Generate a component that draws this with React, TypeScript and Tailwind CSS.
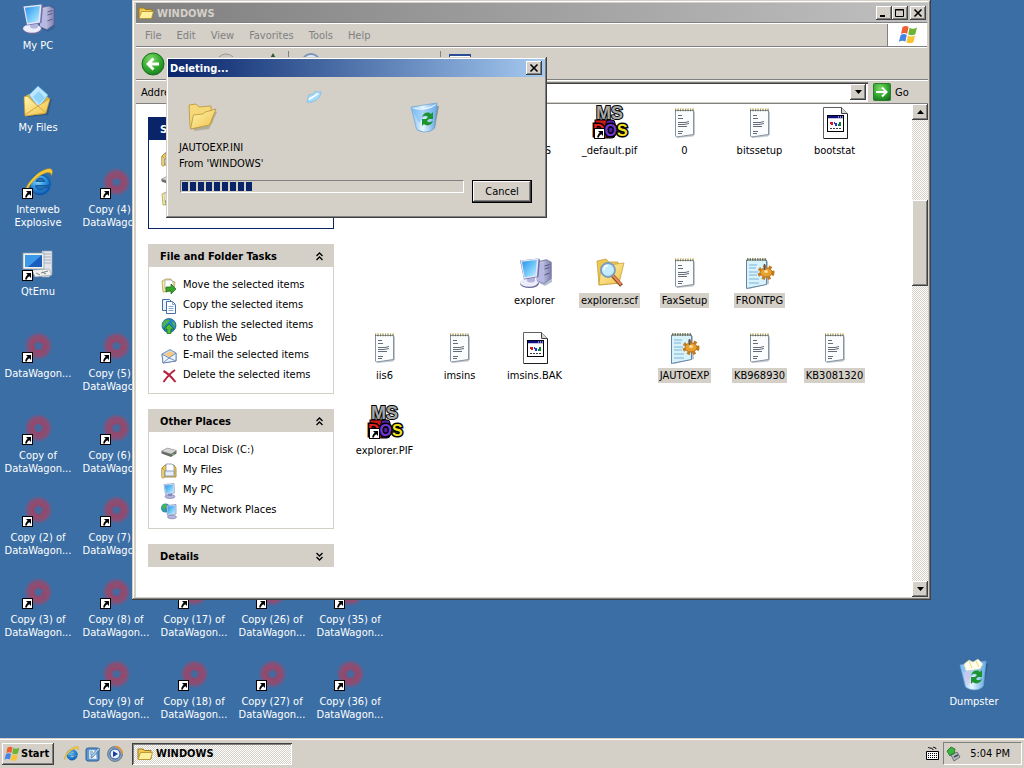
import type { ReactNode } from "react";

const RAISED = "bg-[#d4d0c8] shadow-[inset_-1px_-1px_0_#404040,inset_1px_1px_0_#fff,inset_-2px_-2px_0_#808080]";
const FRAME = "bg-[#d4d0c8] shadow-[inset_-1px_-1px_0_#404040,inset_1px_1px_0_#d4d0c8,inset_-2px_-2px_0_#808080,inset_2px_2px_0_#fff]";
const DITHER = "bg-[conic-gradient(#fff_25%,#d4d0c8_0_50%,#fff_0_75%,#d4d0c8_0)] bg-[length:2px_2px]";

/* ---------- gradients shared by the icons ---------- */

function Gradients() {
  return (
    <svg width="0" height="0" className="absolute" aria-hidden="true">
      <defs>
        <linearGradient id="screen" x1="0" y1="0" x2="1" y2="1">
          <stop offset="0" stopColor="#2a8fe8" />
          <stop offset="0.5" stopColor="#6cc4f8" />
          <stop offset="1" stopColor="#c4f0ff" />
        </linearGradient>
        <linearGradient id="folder" x1="0" y1="0" x2="1" y2="1">
          <stop offset="0" stopColor="#fff6b0" />
          <stop offset="1" stopColor="#f0c048" />
        </linearGradient>
        <linearGradient id="metal" x1="0" y1="0" x2="1" y2="0">
          <stop offset="0" stopColor="#e8e8fa" />
          <stop offset="1" stopColor="#8080b0" />
        </linearGradient>
        <linearGradient id="bin" x1="0" y1="0" x2="1" y2="0">
          <stop offset="0" stopColor="#7cbcf4" />
          <stop offset="0.45" stopColor="#e8f6ff" />
          <stop offset="1" stopColor="#5ca4e4" />
        </linearGradient>
        <radialGradient id="ie" cx="0.4" cy="0.3" r="0.8">
          <stop offset="0" stopColor="#8adcff" />
          <stop offset="0.5" stopColor="#2a8ee0" />
          <stop offset="1" stopColor="#0c4ca0" />
        </radialGradient>
        <radialGradient id="green" cx="0.4" cy="0.3" r="0.8">
          <stop offset="0" stopColor="#80dc68" />
          <stop offset="0.6" stopColor="#2ea42c" />
          <stop offset="1" stopColor="#147018" />
        </radialGradient>
        <radialGradient id="wagon" cx="0.5" cy="0.5" r="0.5">
          <stop offset="0" stopColor="#a04468" stopOpacity="0" />
          <stop offset="0.25" stopColor="#a84060" stopOpacity="0.25" />
          <stop offset="0.42" stopColor="#b43c58" stopOpacity="0.75" />
          <stop offset="0.75" stopColor="#a84464" stopOpacity="0.6" />
          <stop offset="1" stopColor="#904c78" stopOpacity="0" />
        </radialGradient>
      </defs>
    </svg>
  );
}

function Svg({ size = 32, children }: { size?: 16 | 32; children: ReactNode }) {
  return (
    <svg
      viewBox={size === 32 ? "0 0 32 32" : "0 0 16 16"}
      width={size}
      height={size}
      className="block shrink-0 overflow-visible"
      aria-hidden="true"
    >
      {children}
    </svg>
  );
}

/* ---------- 32px icons ---------- */

function Shortcut() {
  return (
    <g>
      <rect x="0.5" y="21.5" width="10" height="10" fill="#fff" stroke="#000" />
      <path d="M4 24h5v5l-1.700-1.700c-1.600 1-2.300 2-2.300 3.200h-1.800c0-2 .8-3.400 2.500-4.800z" fill="#000" />
    </g>
  );
}

const PcIcon = () => (
  <Svg>
    <path d="M20 4l8-2 5 3v20l-7 4-6-3z" fill="#2a4c7c" opacity=".35" />
    <path d="M18 5l9-2 5 2.500v16l-7 5-7-3z" fill="url(#metal)" stroke="#6868a0" strokeWidth=".7" />
    <path d="M19 5l5.500 2v19l-5.500-3z" fill="#b8b8e4" />
    <path d="M25.500 9l5-1.500M25.500 12l5-1.500M25.500 18l5-2" stroke="#55558c" />
    <ellipse cx="10.500" cy="26.500" rx="9.500" ry="4.500" fill="#6c6c9c" />
    <ellipse cx="10" cy="25.500" rx="9" ry="4.200" fill="#ececfa" />
    <path d="M8 20h8v4c-2 2-6 2-8 0z" fill="#b4b4dc" />
    <path d="M1 3.500l18-2 2 1-1.500 17.500-14.500 2.500z" fill="#7070a8" />
    <path d="M1.500 3.500l18-2-1.500 18-13 2.300z" fill="#e6e8f8" />
    <path d="M3 4.700l14.800-1.700-1.300 15.200-10.800 2z" fill="url(#screen)" />
  </Svg>
);

const MyFilesIcon = () => (
  <Svg>
    <path d="M5 10l25 4-4 16-20 2z" fill="#24446c" opacity=".5" />
    <path d="M2 12l5-3 14-1 7 6-5 15-20 2z" fill="#e4b440" />
    <path d="M7 10L16 1l10 9-9 13z" fill="#bce8ff" stroke="#5cacdc" strokeWidth=".7" />
    <path d="M17 6l6 7-6 6-6-7z" fill="#78c8f4" opacity=".65" />
    <path d="M2 12l3-1 11 10 12-7.500-4 14.500L3 31z" fill="url(#folder)" stroke="#c4922c" strokeWidth=".7" />
    <path d="M3 30l13-9 8 7" fill="none" stroke="#d4a438" />
  </Svg>
);

const IeGlyph = () => (
  <g>
    <path d="M28 18.500H13.500c.4 4.600 6.500 6 9 1.800h5c-2 6.500-9 8.700-14 6.200-6-3-7-11-2.500-15.500 6-6 17.500-2.500 17 7.500zM13.800 14.500h9c-.7-4.500-8-4.700-9 0z" fill="url(#ie)" stroke="#0c4484" strokeWidth=".7" />
    <path d="M4.500 27C0 24 10 8 22 3c7-3 10-1 7.500 5.500C29 5 26 4.500 21 7 12 11 5 21 4.500 27z" fill="#f4c838" stroke="#c08c18" strokeWidth=".5" />
  </g>
);

const IeShortcut = () => (
  <Svg>
    <circle cx="18.500" cy="17" r="11.500" fill="#1c70b8" opacity=".8" />
    <IeGlyph />
    <Shortcut />
  </Svg>
);

const QtEmuIcon = () => (
  <Svg>
    <path d="M20 2h10v23l-3 3h-7z" fill="#e2e6ec" stroke="#98a4b4" strokeWidth=".7" />
    <path d="M21 5h8M21 8h8M21 11h8M21 14h8" stroke="#a4b0c0" />
    <rect x="1" y="4" width="21" height="16" fill="#f2f2ea" stroke="#8c98a8" strokeWidth=".7" />
    <rect x="3" y="6" width="17" height="12" fill="#1c5cbc" />
    <path d="M3 6h17L6 18H3z" fill="#3c98e8" />
    <path d="M10 21l17-1 3 6-17 2z" fill="#f0f0ec" stroke="#98a0ac" strokeWidth=".7" />
    <path d="M14 24l4 2m2-3 4 2m-5-1 7-2" stroke="#7c8490" />
    <Shortcut />
  </Svg>
);

const DataWagonIcon = () => (
  <Svg>
    <circle cx="16.500" cy="15" r="14.500" fill="url(#wagon)" />
    <circle cx="16.500" cy="15" r="5" fill="none" stroke="#c03050" strokeWidth="1.500" strokeDasharray="4 2" opacity=".45" />
    <circle cx="16.500" cy="15" r="9.500" fill="none" stroke="#b83858" strokeWidth="2" strokeDasharray="3 3" opacity=".25" />
    <Shortcut />
  </Svg>
);

const BinIcon = ({ full = false }: { full?: boolean }) => (
  <Svg>
    <path d="M6 7l24-2-4 22c-5 5-14 5-18 2z" fill="#2c4864" opacity=".45" />
    <path d="M2 6l26-4-2.500 25c-4 5-13 5-18 1z" fill="url(#bin)" stroke="#6ca4d0" strokeWidth=".7" />
    <path d="M2 6c7 3 18 2 26-4l-2 13c-6-1-12 0-16 7z" fill="#72b8f0" opacity=".55" />
    {full ? (
      <g>
        <path d="M6 5l5-4 4 2 5-3 5 5-3 5-14 2z" fill="#fffdf0" stroke="#c4c8a0" strokeWidth=".5" />
        <path d="M11 2l3 7m4-7 3 6" stroke="#e4d878" />
        <path d="M6 13l6-2 1 13-5 2z" fill="#d8c8ec" opacity=".7" />
      </g>
    ) : (
      <path d="M2 6c8 3 20 1 26-4-4 7-20 9-26 4z" fill="#eaf7ff" />
    )}
    <g fill="#1c9430">
      <path d="M13 16c1-4 6-6 9-3l2-2v7h-7l2-2c-2-2-4-1-6 0z" />
      <path d="M24 20c-1 4-6 6-9 3l-2 2v-7h7l-2 2c2 2 4 1 6 0z" />
    </g>
  </Svg>
);

const TextIcon = () => (
  <Svg>
    <path d="M7 4.500h19v23l-2 2L8 31z" fill="#8c949c" opacity=".5" />
    <path d="M6.500 3.500h18v24l-17 2.500-1-1z" fill="#fbfcfd" stroke="#8894a4" />
    <path d="M6 3h19" stroke="#6c6c50" strokeWidth="2.500" strokeDasharray="1 1.500" />
    <path d="M6 2h19" stroke="#d8c468" strokeDasharray="1.500 1" />
    <path d="M9 8.500h4M9 11.500h5M9 15.500h7l4-1M9 17.500h6l5-1M9 19.500h9M9 24.500h5M9 26.500h4" stroke="#646c78" fill="none" />
  </Svg>
);

const IniIcon = () => (
  <Svg>
    <path d="M3 4h21l1 23-20 5z" fill="#78889c" opacity=".5" />
    <path d="M2.500 3h20v24.500l-20 4z" fill="#d8f2fc" stroke="#6484a4" />
    <path d="M3 2.500h20" stroke="#6c6c48" strokeWidth="2.500" strokeDasharray="1.500 1" />
    <path d="M5 8h8M5 11h7M5 15h9M5 18h8M5 22h10M5 26h10" stroke="#7cb4d8" />
    <g>
      <ellipse cx="22" cy="15.500" rx="7" ry="6" fill="none" stroke="#c07c20" strokeWidth="3" strokeDasharray="3 2.500" />
      <ellipse cx="22" cy="15.500" rx="6" ry="4.500" fill="#eaa02c" stroke="#b87018" />
      <ellipse cx="22" cy="14.500" rx="2" ry="1.500" fill="#fbe0a0" />
      <path d="M20.500 7v6" stroke="#505868" strokeWidth="1.500" />
    </g>
  </Svg>
);

const BakIcon = () => (
  <Svg>
    <path d="M4.500.5h18l6 6v25h-24z" fill="#fff" stroke="#606060" />
    <path d="M5 31.500h23.500V7" fill="none" stroke="#202020" />
    <path d="M22.500.5v6h6" fill="#d4d4d4" stroke="#404040" />
    <rect x="8.500" y="8.500" width="16" height="16" fill="#fff" stroke="#000" />
    <path d="M9 10h15" stroke="#10107c" strokeWidth="2.500" />
    <path d="M19 10h1m1 0h1m1 0h1" stroke="#fff" />
    <path d="M11 15h3v3h-2v-1h-1z" fill="#d01818" />
    <path d="M15 15h1v1h2v3h-2v-2h-1z" fill="#1838c8" />
    <path d="M20 15h2v4h-3v-2h1z" fill="#107c38" />
    <path d="M11 21.500h2m1 0h2m1 0h2m1 0h2" stroke="#404040" />
  </Svg>
);

const DosIcon = () => (
  <Svg>
    <rect x="1" y="13" width="13" height="18" fill="#d01818" stroke="#000" />
    <rect x="12" y="13" width="9" height="18" rx="3" fill="#5420a4" stroke="#000" />
    <g fontFamily="'Liberation Sans', sans-serif" fontWeight="700" stroke="#000" paintOrder="stroke">
      <text x="2" y="12" fontSize="18" strokeWidth="2" fill="#a8a8a8">MS</text>
      <text x="-1" y="29" fontSize="16" strokeWidth="3">
        <tspan fill="#e82020">D</tspan>
        <tspan fill="#7038d0">O</tspan>
        <tspan fill="#f4e020">S</tspan>
      </text>
    </g>
    <Shortcut />
  </Svg>
);

const ScfIcon = () => (
  <Svg>
    <path d="M3 4l9-2 3 3h9l1 21-20 2z" fill="#eec850" stroke="#c09830" strokeWidth=".7" />
    <path d="M7 9l23-3-5 20-20 2z" fill="url(#folder)" stroke="#c09830" strokeWidth=".7" />
    <path d="M18.500 18.500l9 10" stroke="#8c4c28" strokeWidth="4" />
    <path d="M18.500 18l8.500 9.500" stroke="#e88c58" strokeWidth="2" />
    <circle cx="14" cy="13" r="7" fill="#c4ecff" stroke="#7c9cc0" strokeWidth="1.800" />
    <path d="M10 13c0-3 2-4.500 4-4.500" stroke="#fff" strokeWidth="1.500" fill="none" />
  </Svg>
);

const OpenFolderIcon = () => (
  <Svg>
    <path d="M6 8l25 3-8 17-15 2z" fill="#807850" opacity=".4" />
    <path d="M3 4l7-1 3 3 12-1 1 17-20 6-2-2z" fill="#f6d878" stroke="#b89438" strokeWidth=".8" />
    <path d="M4.500 28l3-14 9-1 3-2 10.500-3-6.500 16z" fill="url(#folder)" stroke="#b89438" strokeWidth=".8" />
  </Svg>
);

/* ---------- 16px icons ---------- */

const FolderSmall = () => (
  <Svg size={16}>
    <path d="M1 3h5l1.500 1.500H14V13H1z" fill="#f0c850" stroke="#9c7820" />
    <path d="M3.500 6.500h12L13.500 13.500H1z" fill="#fff09c" stroke="#b08c28" strokeWidth=".8" />
  </Svg>
);

const FlagIcon = ({ size = 16 }: { size?: 16 | 32 }) => (
  <svg viewBox="0 0 18 18" width={size === 16 ? 18 : 22} height={size === 16 ? 18 : 22} className="block shrink-0" aria-hidden="true">
    <path d="M4.500 2.500c2-1.300 3.700-1 5 0L8.300 8c-1.600-1-3-1-5 .1z" fill="#ec6038" />
    <path d="M10.300 3c2 1.200 3.500 1 6-.2L15 8.300c-2.200 1.200-4 1.200-5.800.1z" fill="#6cb434" />
    <path d="M3 9c2-1.200 3.600-1 5-.1L6.800 14.500c-1.600-1-3.300-1-5.300.2z" fill="#4484e4" />
    <path d="M9 9.500c2 1.100 3.700 1 5.800-.2l-1.300 5.600c-2.200 1.200-4 1.100-5.800 0z" fill="#f8c434" />
  </svg>
);

const MoveIcon = () => (
  <Svg size={16}>
    <path d="M1 3l4-2h5l1 2 3 1-1 9-11 1z" fill="#f6e89c" stroke="#a89448" strokeWidth=".7" />
    <path d="M4 2h6l2 2v7H4z" fill="#fff" stroke="#98a0b0" strokeWidth=".7" />
    <path d="M5 9h5V6l5 5-5 5v-3H7l-2 1z" fill="#38a428" stroke="#14641c" strokeWidth=".7" />
  </Svg>
);
const CopyIcon = () => (
  <Svg size={16}>
    <path d="M1.500 1.500h7l2 2v9h-9z" fill="#e8f2ff" stroke="#486ca8" />
    <path d="M5.500 3.500h6l3 3v9h-9z" fill="#fff" stroke="#486ca8" />
    <path d="M11.500 3.500v3h3M7.500 8.500h5m-5 2h5m-5 2h5" stroke="#84a8d4" fill="none" />
  </Svg>
);
const PublishIcon = () => (
  <Svg size={16}>
    <circle cx="8" cy="7.500" r="7" fill="#2484c4" stroke="#145888" strokeWidth=".7" />
    <path d="M2 4c3-3 6-3 7-2L7 5 5 6 3 9 1 8zM11 3l3 2v4l-2-2z" fill="#4cb44c" />
    <path d="M8 6l5 5h-3v4.500H6V11H3z" fill="#50c038" stroke="#14681c" strokeWidth=".7" />
  </Svg>
);
const MailIcon = () => (
  <Svg size={16}>
    <path d="M1 6l8-4.500L15 5v8L2 15z" fill="#c4dcf8" stroke="#5878a8" strokeWidth=".8" />
    <path d="M3 6l7-3 4 3-5 4z" fill="#f8c880" />
    <path d="M1 6l7 4 7-5v8L2 15z" fill="#eaf4ff" stroke="#5878a8" strokeWidth=".8" />
    <path d="M2 15l6-5 7 3" stroke="#7890b8" fill="none" />
  </Svg>
);
const DeleteIcon = () => (
  <Svg size={16}>
    <path d="M2.500 3c4 2 8 6 12 11M14 2C9 5 6 9 2.500 14" stroke="#b8203c" strokeWidth="2" fill="none" />
  </Svg>
);
const DiskIcon = () => (
  <Svg size={16}>
    <path d="M.5 8l6-3 9 2.500v3L10 14 .5 10.500z" fill="#686868" />
    <path d="M.5 8l6-3 9 2.500L10 11z" fill="#d4d4d4" stroke="#909090" strokeWidth=".5" />
    <path d="M11 12l2-1" stroke="#78e068" />
  </Svg>
);
const FilesSmall = () => (
  <Svg size={16}>
    <path d="M1 5l3-3h9l2 3v9H1z" fill="#f0c850" stroke="#a07c20" strokeWidth=".8" />
    <path d="M5 1h6l2 2v8H5z" fill="#fff" stroke="#7890b8" strokeWidth=".8" />
    <path d="M4 8h9v5H4z" fill="#e4eefc" stroke="#7890b8" strokeWidth=".8" />
    <path d="M1 5l2 2v8H1z" fill="#fff09c" stroke="#a07c20" strokeWidth=".6" />
  </Svg>
);
const PcSmall = () => (
  <Svg size={16}>
    <ellipse cx="9" cy="13.500" rx="5" ry="2" fill="#b4b4dc" stroke="#7878a8" strokeWidth=".6" />
    <path d="M7 10h4v3H7z" fill="#8888bc" />
    <path d="M3 1.500l10-1 .5 9.500-9 1.500z" fill="#d8e0f4" stroke="#7890c0" strokeWidth=".6" />
    <path d="M4 2.500l8-.7.3 7.500-7.300 1z" fill="url(#screen)" />
  </Svg>
);
const NetworkIcon = () => (
  <Svg size={16}>
    <circle cx="4.500" cy="5" r="4.500" fill="#2c98a8" />
    <path d="M1 3l3-2 2 2-3 4z" fill="#4cb848" />
    <ellipse cx="11" cy="14" rx="4.500" ry="1.800" fill="#b4b4dc" stroke="#7878a8" strokeWidth=".6" />
    <path d="M5.500 2.500l9.500-1v9.500l-8.500 1.500z" fill="#d8e0f4" stroke="#6078a8" strokeWidth=".6" />
    <path d="M6.500 3.500l7.500-.8v7.500l-7 1z" fill="url(#screen)" />
  </Svg>
);
const IeSmall = () => (
  <svg viewBox="1 1 30 30" width="16" height="16" className="block" aria-hidden="true">
    <circle cx="18" cy="17" r="11" fill="#6cc0f0" opacity=".7" />
    <IeGlyph />
  </svg>
);
const ShowDesktop = () => (
  <Svg size={16}>
    <rect x="1" y="2" width="13" height="13" rx="2" fill="#5898d0" stroke="#2c5c94" />
    <path d="M4 4h7l1 9H4z" fill="#f4faff" stroke="#7ca0c8" strokeWidth=".6" />
    <path d="M6 10l7-8 2 1-7 8-2 1z" fill="#a8d4f4" stroke="#34648c" strokeWidth=".7" />
    <path d="M5 6h3M5 8h2" stroke="#507ca8" />
  </Svg>
);
const PlayerIcon = () => (
  <Svg size={16}>
    <circle cx="8" cy="8" r="7.500" fill="#88a0b8" stroke="#4c6480" strokeWidth=".7" />
    <path d="M8 .500A7.500 7.500 0 0 1 15.500 8" stroke="#f09030" strokeWidth="1.500" fill="none" />
    <circle cx="8" cy="8" r="5" fill="#eaf4ff" stroke="#2c58a8" />
    <path d="M6 5l5 3-5 3z" fill="#1c3c9c" />
  </Svg>
);
const KeyboardIcon = () => (
  <Svg size={16}>
    <path d="M4 1c1 2 5 0 5 3M9 1c1 1 3 0 3 2" stroke="#000" fill="none" />
    <path d="M2.500 5.500h12v8h-12z" fill="#fff" stroke="#000" />
    <path d="M4 7.500h9M4 9.500h9M4 11.500h9" stroke="#000" strokeDasharray="1 1" />
  </Svg>
);
const SafelyRemove = () => (
  <Svg size={16}>
    <path d="M5 9l6-3 3 5-6 4z" fill="#b8bcc0" stroke="#505860" strokeWidth=".8" />
    <path d="M8 11l4-2" stroke="#404850" strokeWidth="1.500" />
    <path d="M1 5l4-4 4 2-1 5H6l-2 2z" fill="#3cb43c" stroke="#18701c" strokeWidth=".8" />
  </Svg>
);

/* ---------- desktop ---------- */

type Item = { icon: ReactNode; label: string } | null;

const dw = (label: string): Item => ({ icon: <DataWagonIcon />, label });
const gap = (n: number): Item[] => Array.from({ length: n }, () => null);

const desktopColumns: Item[][] = [
  [
    { icon: <PcIcon />, label: "My PC" },
    { icon: <MyFilesIcon />, label: "My Files" },
    { icon: <IeShortcut />, label: "Interweb Explosive" },
    { icon: <QtEmuIcon />, label: "QtEmu" },
    dw("DataWagon..."),
    dw("Copy of DataWagon..."),
    dw("Copy (2) of DataWagon..."),
    dw("Copy (3) of DataWagon..."),
  ],
  [
    ...gap(2),
    dw("Copy (4) of DataWagon..."),
    null,
    dw("Copy (5) of DataWagon..."),
    dw("Copy (6) of DataWagon..."),
    dw("Copy (7) of DataWagon..."),
    dw("Copy (8) of DataWagon..."),
    dw("Copy (9) of DataWagon..."),
  ],
  [...gap(7), dw("Copy (17) of DataWagon..."), dw("Copy (18) of DataWagon...")],
  [...gap(7), dw("Copy (26) of DataWagon..."), dw("Copy (27) of DataWagon...")],
  [...gap(7), dw("Copy (35) of DataWagon..."), dw("Copy (36) of DataWagon...")],
];

function DesktopIcon({ item }: { item: Item }) {
  return (
    <div className="flex h-[82px] w-[78px] flex-col items-center gap-1 pt-[3px] pr-[2px] text-center leading-[13px] text-white">
      {item && (
        <>
          {item.icon}
          <span className="w-[74px]">{item.label}</span>
        </>
      )}
    </div>
  );
}

/* ---------- explorer window ---------- */

function Caption({ label, children }: { label: string; children: ReactNode }) {
  return (
    <button type="button" aria-label={label} className={`${RAISED} flex h-[14px] w-4 items-center justify-center`}>
      <svg viewBox="0 0 12 10" width="12" height="10" fill="none" stroke="#000" aria-hidden="true">
        {children}
      </svg>
    </button>
  );
}

const CloseGlyph = () => <path d="M2.500 1.500l7 7m0-7l-7 7" strokeWidth="1.600" />;

function Panel({ title, dark = false, closed = false, children }: { title: string; dark?: boolean; closed?: boolean; children?: ReactNode }) {
  return (
    <section>
      <button
        type="button"
        className={`flex h-[23px] w-full items-center justify-between pt-[2px] pr-[10px] pl-3 font-bold ${dark ? "bg-[#0a246a] text-white" : "bg-[#d4d0c8] text-black"}`}
      >
        {title}
        <svg viewBox="0 0 9 10" width="9" height="10" fill="none" stroke="currentColor" strokeWidth="1.300" aria-hidden="true">
          <path d={closed ? "M1.500 1l3 3 3-3M1.500 5l3 3 3-3" : "M1.500 4l3-3 3 3M1.500 8l3-3 3 3"} />
        </svg>
      </button>
      {children && (
        <div className={`border border-t-0 px-3 pt-[11px] pb-[5px] ${dark ? "h-[89px] border-[#0a246a]" : "border-[#d4d0c8]"}`}>{children}</div>
      )}
    </section>
  );
}

function TaskList({ items }: { items: [ReactNode, string][] }) {
  return (
    <ul>
      {items.map(([icon, label]) => (
        <li key={label}>
          <a href="#" className="flex items-start gap-[6px] pb-1 leading-[13px]">
            {icon}
            <span className="flex-1">{label}</span>
          </a>
        </li>
      ))}
    </ul>
  );
}

type FileItem = { icon: ReactNode; label: string; selected?: boolean } | null;

const files: FileItem[] = [
  null,
  null,
  { icon: <TextIcon />, label: "FONTS" },
  { icon: <DosIcon />, label: "_default.pif" },
  { icon: <TextIcon />, label: "0" },
  { icon: <TextIcon />, label: "bitssetup" },
  { icon: <BakIcon />, label: "bootstat" },
  null, null, null, null, null, null, null,
  null,
  null,
  { icon: <PcIcon />, label: "explorer" },
  { icon: <ScfIcon />, label: "explorer.scf", selected: true },
  { icon: <TextIcon />, label: "FaxSetup", selected: true },
  { icon: <IniIcon />, label: "FRONTPG", selected: true },
  null,
  { icon: <TextIcon />, label: "iis6" },
  { icon: <TextIcon />, label: "imsins" },
  { icon: <BakIcon />, label: "imsins.BAK" },
  null,
  { icon: <IniIcon />, label: "JAUTOEXP", selected: true },
  { icon: <TextIcon />, label: "KB968930", selected: true },
  { icon: <TextIcon />, label: "KB3081320", selected: true },
  { icon: <DosIcon />, label: "explorer.PIF" },
];

function Arrow({ up = false }: { up?: boolean }) {
  return (
    <svg viewBox="0 0 7 4" width="7" height="4" aria-hidden="true">
      <path d={up ? "M0 4L3.500 0 7 4z" : "M0 0h7L3.500 4z"} />
    </svg>
  );
}

function Explorer() {
  return (
    <main className={`${FRAME} absolute top-0 left-[132px] flex h-[600px] w-[799px] flex-col p-[3px] pl-1`}>
      <header className="flex h-5 shrink-0 items-center gap-[3px] bg-linear-to-r from-[#808080] to-[#c0c0c0] px-[2px]">
        <FolderSmall />
        <h1 className="flex-1 font-bold text-[#d4d0c8]">WINDOWS</h1>
        <div className="flex">
          <Caption label="Minimize"><path d="M2 8h5" strokeWidth="2" /></Caption>
          <Caption label="Maximize"><path d="M1.500 1.500h8v7h-8zM1 2h9" /></Caption>
          <span className="w-[2px]" />
          <Caption label="Close"><CloseGlyph /></Caption>
        </div>
      </header>

      <nav className="mr-px flex h-6 shrink-0 border-t border-b border-t-white border-b-[#808080] text-[#808080] shadow-[0_1px_0_#fff,0_-1px_0_#808080]">
        <div className="flex flex-1 items-center gap-[15px] pt-px pl-[9px]">
          {["File", "Edit", "View", "Favorites", "Tools", "Help"].map((m) => (
            <button type="button" key={m}>{m}</button>
          ))}
        </div>
        <div className="flex w-10 items-center justify-center border-l border-[#808080] bg-white">
          <FlagIcon size={32} />
        </div>
      </nav>

      <div className="mt-[2px] flex h-[31px] shrink-0 items-center border-b border-[#808080] pl-[5px]">
        <button type="button" aria-label="Back" className="w-[74px]">
          <svg viewBox="0 0 24 24" width="24" height="24" aria-hidden="true">
            <circle cx="12" cy="12" r="11" fill="url(#green)" stroke="#187020" />
            <path d="M18 12H8m4.500-5.500L7 12l5.500 5.500" stroke="#fff" strokeWidth="2.800" fill="none" />
          </svg>
        </button>
        <button type="button" aria-label="Forward" className="w-[44px]">
          <svg viewBox="0 0 22 22" width="22" height="22" aria-hidden="true">
            <circle cx="11" cy="11" r="10" fill="#c8c8c4" stroke="#989894" />
          </svg>
        </button>
        <button type="button" aria-label="Up" className="w-[29px]">
          <svg viewBox="0 0 20 22" width="20" height="22" aria-hidden="true">
            <path d="M14 0l4 7h-8z" fill="#30582c" />
          </svg>
        </button>
        <span className="h-[26px] w-px bg-[#808080]" />
        <button type="button" aria-label="Search" className="ml-3 w-[139px]">
          <svg viewBox="0 0 22 22" width="22" height="22" aria-hidden="true">
            <circle cx="10" cy="10" r="9" fill="#d8ecf8" stroke="#7c94b4" strokeWidth="2" />
          </svg>
        </button>
        <span className="h-[26px] w-px bg-[#808080]" />
        <button type="button" aria-label="Views" className="ml-2 h-5 w-[22px] border border-t-2 border-[#2c4c94] bg-white" />
      </div>

      <div className="flex h-6 shrink-0 items-center gap-1 border-t border-b border-t-white border-b-[#808080] pl-[5px]">
        <label htmlFor="address">Address</label>
        <div className="flex h-5 flex-1 bg-white p-[2px] shadow-[inset_1px_1px_0_#808080,inset_2px_2px_0_#404040,inset_-1px_-1px_0_#fff]">
          <input id="address" className="min-w-0 flex-1 outline-none" />
          <button type="button" aria-label="Show addresses" className={`${RAISED} flex w-4 items-center justify-center`}>
            <Arrow />
          </button>
        </div>
        <button type="button" className="flex w-14 items-center gap-1 pl-px">
          <svg viewBox="0 0 18 18" width="18" height="18" aria-hidden="true">
            <rect x=".5" y=".5" width="17" height="17" rx="1" fill="url(#green)" stroke="#2c7c30" />
            <path d="M3 9h10M9 4.500L13.500 9 9 13.500" stroke="#fff" strokeWidth="2" fill="none" />
          </svg>
          Go
        </button>
      </div>

      <div className="flex min-h-0 flex-1 bg-white">
        <aside className="flex w-[198px] shrink-0 flex-col gap-[15px] pt-[13px] pl-3">
          <Panel title="System Tasks" dark>
            <TaskList items={[[<FilesSmall />, "Hide the contents"], [<DiskIcon />, "Add or remove programs"], [<MoveIcon />, "Search for files"]]} />
          </Panel>
          <Panel title="File and Folder Tasks">
            <TaskList
              items={[
                [<MoveIcon />, "Move the selected items"],
                [<CopyIcon />, "Copy the selected items"],
                [<PublishIcon />, "Publish the selected items to the Web"],
                [<MailIcon />, "E-mail the selected items"],
                [<DeleteIcon />, "Delete the selected items"],
              ]}
            />
          </Panel>
          <Panel title="Other Places">
            <TaskList
              items={[
                [<DiskIcon />, "Local Disk (C:)"],
                [<FilesSmall />, "My Files"],
                [<PcSmall />, "My PC"],
                [<NetworkIcon />, "My Network Places"],
              ]}
            />
          </Panel>
          <Panel title="Details" closed />
        </aside>

        <div className="grid flex-1 auto-rows-[75px] grid-cols-[repeat(7,75px)] pt-[3px] pl-[13px]">
          {files.map((f, i) => (
            <div key={i} className="flex flex-col items-center gap-1">
              {f && (
                <>
                  {f.icon}
                  <span className={`px-[2px] leading-[15px] ${f.selected ? "bg-[#d4d0c8]" : ""}`}>{f.label}</span>
                </>
              )}
            </div>
          ))}
        </div>

        <div className={`${DITHER} flex w-4 shrink-0 flex-col`}>
          <button type="button" aria-label="Scroll up" className={`${RAISED} flex h-4 items-center justify-center`}>
            <Arrow up />
          </button>
          <div className={`${RAISED} mt-20 h-[86px]`} />
          <span className="flex-1" />
          <button type="button" aria-label="Scroll down" className={`${RAISED} flex h-4 items-center justify-center`}>
            <Arrow />
          </button>
        </div>
      </div>
    </main>
  );
}

/* ---------- progress dialog ---------- */

function DeletingDialog() {
  return (
    <div role="dialog" aria-labelledby="deleting" className={`${FRAME} absolute top-[57px] left-[166px] h-[161px] w-[381px] p-[2px]`}>
      <header className="flex h-[18px] items-center justify-between bg-linear-to-r from-[#0a246a] to-[#a6caf0] pr-[3px] pl-[2px]">
        <h2 id="deleting" className="font-bold text-white">Deleting...</h2>
        <Caption label="Close"><CloseGlyph /></Caption>
      </header>
      <div className="flex h-14 items-end pl-[18px]">
        <OpenFolderIcon />
        <div className="flex w-[191px] justify-center self-start pt-3">
          <svg viewBox="0 0 18 16" width="16" height="14" aria-hidden="true">
            <path d="M1 15l2-8 5-1 3-4 2 2 4-1c0 6-5 10-11 12z" fill="#a4dcfc" stroke="#6cb4e8" strokeWidth=".7" />
            <path d="M3 12l5-3 6-4" stroke="#fff" strokeWidth="2" fill="none" />
          </svg>
        </div>
        <BinIcon />
      </div>
      <div className="pt-[7px] pl-[11px] leading-4">
        <p>JAUTOEXP.INI</p>
        <p>From 'WINDOWS'</p>
      </div>
      <div className="mt-2 flex items-start gap-2 pr-[13px] pl-3">
        <div
          role="progressbar"
          aria-label="Deleting files"
          aria-valuenow={25}
          className="flex h-[13px] flex-1 gap-[2px] border border-t-[#808080] border-r-white border-b-white border-l-[#808080] p-px"
        >
          {Array.from({ length: 9 }, (_, i) => (
            <span key={i} className="w-[6px] bg-[#0a246a]" />
          ))}
        </div>
        <button type="button" className={`${RAISED} h-[23px] w-[60px] border border-black`}>
          Cancel
        </button>
      </div>
    </div>
  );
}

/* ---------- taskbar ---------- */

function Taskbar() {
  return (
    <footer className="flex h-[30px] shrink-0 items-center border-t border-[#d4d0c8] bg-[#d4d0c8] px-[2px] shadow-[inset_0_1px_0_#fff]">
      <button type="button" className={`${RAISED} flex h-[22px] w-[52px] items-center pl-px font-bold`}>
        <FlagIcon />
        Start
      </button>
      <div className="flex w-[78px] items-center gap-[6px] pl-[9px]">
        <button type="button" aria-label="Web browser"><IeSmall /></button>
        <button type="button" aria-label="Show desktop"><ShowDesktop /></button>
        <button type="button" aria-label="Media player"><PlayerIcon /></button>
      </div>
      <button
        type="button"
        className={`${DITHER} flex h-[22px] w-40 items-center gap-[3px] pl-[5px] font-bold shadow-[inset_1px_1px_0_#404040,inset_-1px_-1px_0_#fff,inset_2px_2px_0_#808080]`}
      >
        <FolderSmall />
        WINDOWS
      </button>
      <div className="ml-auto flex items-center gap-[3px]">
        <KeyboardIcon />
        <div className="flex h-[23px] w-[79px] items-center justify-between border border-t-[#808080] border-r-white border-b-white border-l-[#808080] pr-[11px] pl-[2px]">
          <SafelyRemove />
          <time>5:04 PM</time>
        </div>
      </div>
    </footer>
  );
}

export default function App() {
  return (
    <div className="flex min-h-screen flex-col overflow-hidden bg-[#3a6ea5] font-['DejaVu_Sans_Condensed','Noto_Sans',sans-serif] text-[11px] leading-[13px] text-black">
      <Gradients />
      <div className="relative flex-1">
        <div className="flex">
          {desktopColumns.map((column, c) => (
            <div key={c}>
              {column.map((item, r) => (
                <DesktopIcon key={r} item={item} />
              ))}
            </div>
          ))}
        </div>
        <div className="absolute right-[10px] bottom-0">
          <DesktopIcon item={{ icon: <BinIcon full />, label: "Dumpster" }} />
        </div>
        <Explorer />
        <DeletingDialog />
      </div>
      <Taskbar />
    </div>
  );
}
